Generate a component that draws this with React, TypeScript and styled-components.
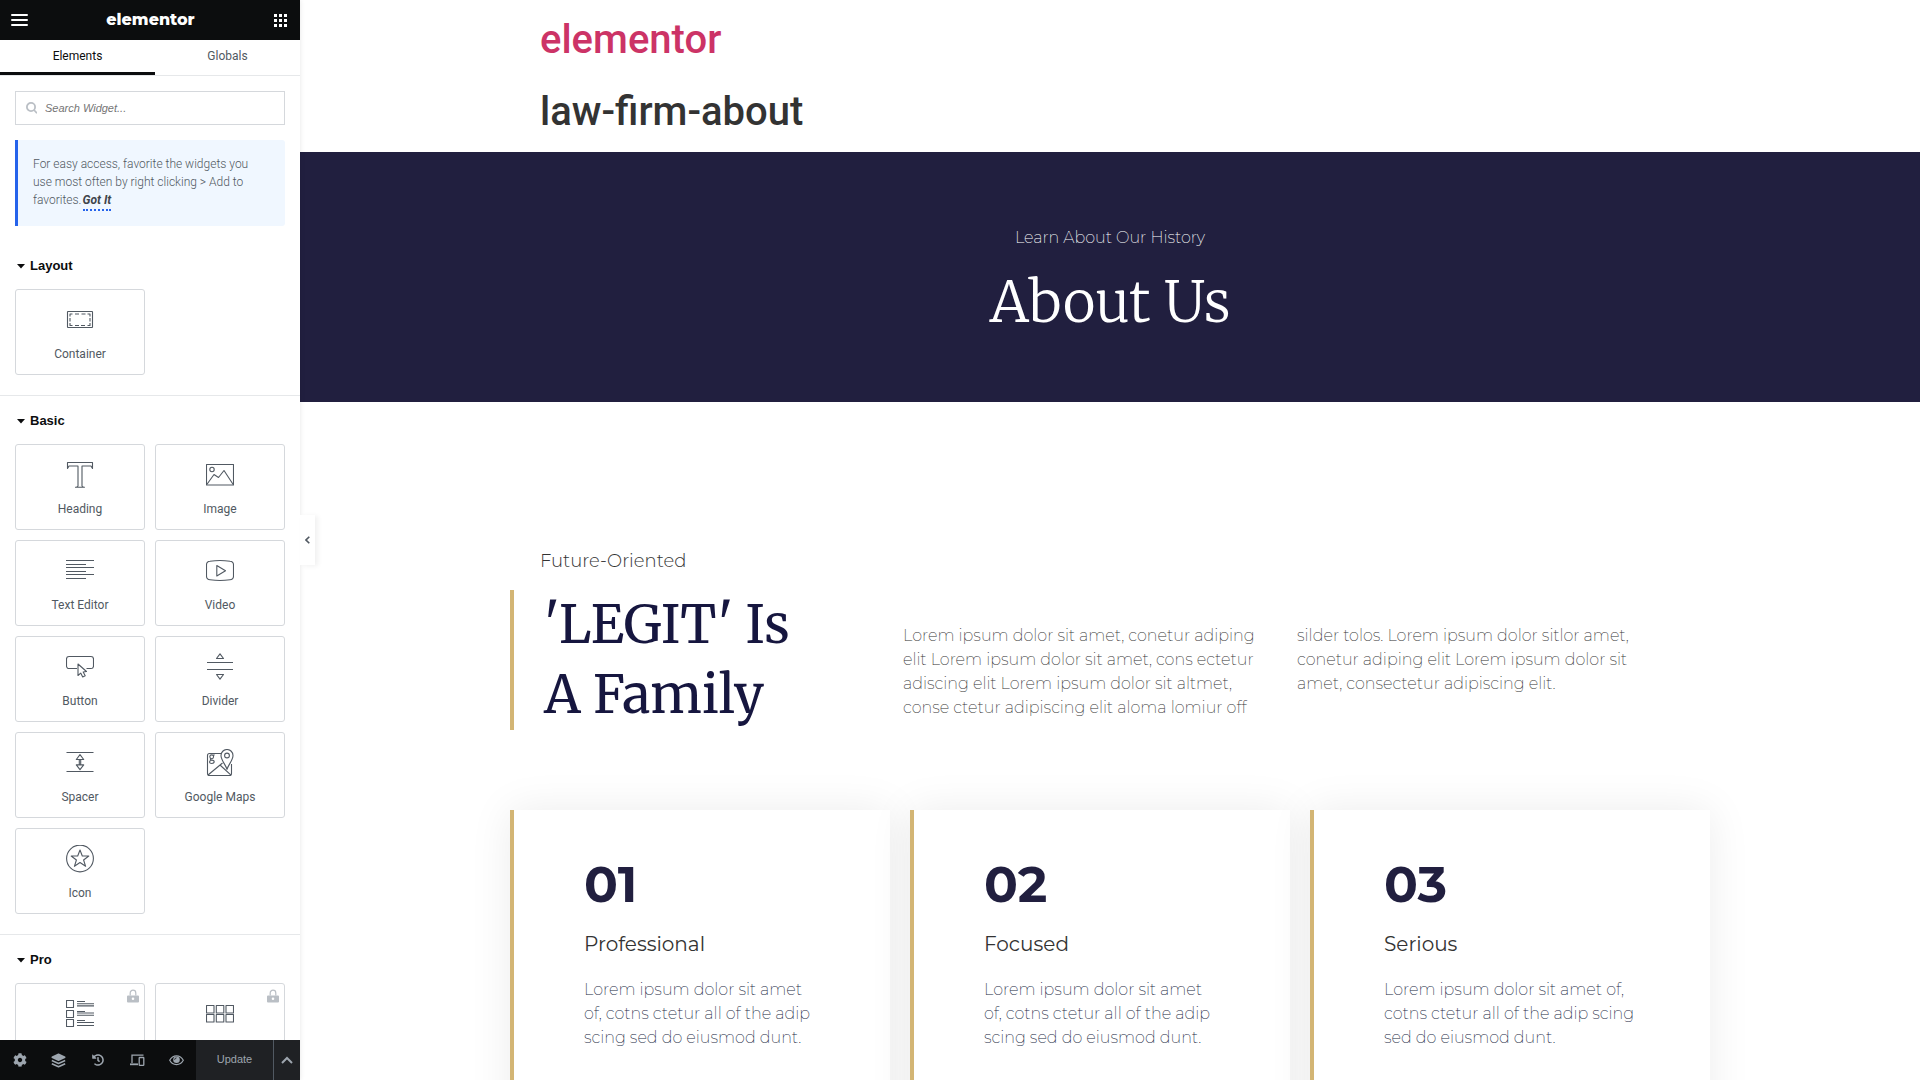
import React from "react";
import styled, { createGlobalStyle } from "styled-components";
import { FaCog, FaHistory } from "react-icons/fa";

const GlobalStyle = createGlobalStyle`
  *, *::before, *::after { box-sizing: border-box; }
  body { margin: 0; font-family: Roboto, "Liberation Sans", sans-serif; background: #fff; }
  h1, h2, h3, p { margin: 0; font-size: inherit; font-weight: inherit; }
  button { font: inherit; cursor: pointer; }
  svg { display: block; flex: none; }
`;

const ink = "#515962";
const line = "#d5d8dc";
const navy = "#211f3f";
const gold = "#d3b574";

const Editor = styled.div`
  display: flex;
  height: 100vh;
  overflow: hidden;
`;

/* ---------- Panel ---------- */

const Panel = styled.aside`
  position: relative;
  z-index: 1;
  flex: 0 0 300px;
  display: flex;
  flex-direction: column;
  background: #fff;
  color: ${ink};
  font-size: 12px;
  box-shadow: 0 0 5px rgba(0, 0, 0, 0.1);
`;

const PanelHeader = styled.header`
  flex: none;
  display: flex;
  align-items: center;
  justify-content: space-between;
  height: 40px;
  padding: 0 12px 0 11px;
  background: #0c0d0e;
  color: #fff;
`;

const HeaderButton = styled.button`
  display: flex;
  padding: 0;
  border: 0;
  background: none;
  color: inherit;
`;

const Logo = styled.span`
  font: 800 16px/24px Montserrat, Inter, sans-serif;
`;

const Tabs = styled.div`
  flex: none;
  display: flex;
  height: 36px;
  border-bottom: 1px solid #e6e8ea;
`;

const Tab = styled.button<{ $active?: boolean }>`
  flex: ${(p) => (p.$active ? "0 0 155px" : "1")};
  padding: 0;
  border: 0;
  border-bottom: 3px solid ${(p) => (p.$active ? "#0c0d0e" : "transparent")};
  background: none;
  color: ${(p) => (p.$active ? "#0c0d0e" : ink)};
  line-height: 32px;
`;

const PanelBody = styled.div`
  flex: 1;
  min-height: 0;
  overflow: hidden;
`;

const SearchBox = styled.label`
  display: flex;
  align-items: center;
  gap: 8px;
  height: 34px;
  margin: 15px;
  padding: 0 10px;
  border: 1px solid ${line};
  color: #babfc5;
`;

const SearchInput = styled.input`
  flex: 1;
  min-width: 0;
  padding: 0;
  border: 0;
  outline: 0;
  background: none;
  color: ${ink};
  font: italic 11px/16px "Liberation Sans", Arial, sans-serif;
  &::placeholder { color: #757575; opacity: 1; }
`;

const Notice = styled.p`
  && { margin: 0 15px 15px; }
  padding: 15px 24px 17px 15px;
  border-left: 3px solid #2563eb;
  border-radius: 0 3px 3px 0;
  background: #f0f7ff;
  font-weight: 300;
  line-height: 18px;
`;

const GotIt = styled.a`
  margin-left: 1px;
  padding-bottom: 2px;
  border-bottom: 2px dotted #2563eb;
  color: #3f444b;
  font-weight: 700;
  font-style: italic;
  text-decoration: none;
`;

const Category = styled.section`
  padding: 0 15px 20px;
  & + & { border-top: 1px solid #e6e8ea; }
`;

const CategoryTitle = styled.button`
  display: flex;
  align-items: center;
  gap: 5px;
  width: 100%;
  height: 48px;
  padding: 2px 2px 0;
  border: 0;
  background: none;
  color: #0c0d0e;
  font: 700 13px/16px "Liberation Sans", Arial, sans-serif;
`;

const WidgetGrid = styled.div`
  display: grid;
  grid-template-columns: 1fr 1fr;
  gap: 10px;
`;

const Widget = styled.button`
  position: relative;
  display: flex;
  flex-direction: column;
  align-items: center;
  gap: 12px;
  height: 86px;
  padding: 16px 0 0;
  border: 1px solid ${line};
  border-radius: 3px;
  background: #fff;
  color: ${ink};
  line-height: 16px;
`;

const LockBadge = styled.span`
  position: absolute;
  top: 5px;
  right: 5px;
  color: #babfc5;
`;

const Footer = styled.footer`
  flex: none;
  display: flex;
  height: 40px;
  background: #0c0d0e;
  color: #9da5ae;
`;

const ToolButton = styled.button`
  flex: 1;
  display: flex;
  align-items: center;
  justify-content: center;
  padding: 0;
  border: 0;
  background: none;
  color: inherit;
`;

const Update = styled.button`
  flex: 0 0 77px;
  padding: 0 0 3px;
  border: 0;
  background: #1f2124;
  color: #9da5ae;
  && { font: 11px/16px "Liberation Sans", Arial, sans-serif; }
`;

const UpdateMore = styled(ToolButton)`
  flex: 0 0 27px;
  border-left: 1px solid #515962;
  background: #1f2124;
`;

const Collapse = styled.button`
  position: absolute;
  top: calc(50% - 25px);
  left: 100%;
  display: flex;
  align-items: center;
  justify-content: center;
  width: 15px;
  height: 50px;
  padding: 0;
  border: 0;
  background: #fff;
  color: ${ink};
  box-shadow: 3px 1px 5px rgba(0, 0, 0, 0.06);
`;

/* ---------- Page preview ---------- */

const Preview = styled.main`
  flex: 1;
  min-width: 0;
  overflow: hidden;
`;

const SiteHeader = styled.header`
  display: flex;
  flex-direction: column;
  gap: 24px;
  max-width: 1140px;
  margin: 0 auto;
  padding: 16px 0;
  color: #333;
  font-size: 40px;
  font-weight: 500;
  line-height: 48px;
`;

const SiteLink = styled.a`
  color: #cc3366;
  text-decoration: none;
`;

const Hero = styled.section`
  display: flex;
  flex-direction: column;
  align-items: center;
  gap: 16px;
  padding: 74px 0 64px;
  background: ${navy};
  color: #fff;
  text-align: center;
`;

const HeroKicker = styled.p`
  font: 200 16px/24px Montserrat, Inter, sans-serif;
`;

const HeroTitle = styled.h2`
  font: 300 56px/72px Merriweather, "DejaVu Serif", serif;
`;

const Content = styled.section`
  max-width: 1200px;
  margin: 0 auto;
  padding-top: 146px;
`;

const Intro = styled.div`
  display: grid;
  grid-template-columns: 393px minmax(0, 758px);
  align-items: end;
`;

const Kicker = styled.p`
  padding: 0 30px 16px;
  color: #333;
  font: 300 18px/26px Montserrat, Inter, sans-serif;
`;

const IntroTitle = styled.h2`
  padding-left: 30px;
  border-left: 4px solid ${gold};
  color: #16163f;
  font: 400 52px/70px Merriweather, "DejaVu Serif", serif;
`;

const IntroText = styled.p`
  padding-bottom: 10px;
  columns: 2;
  column-gap: 30px;
  color: #333;
  font: 200 16px/24px Montserrat, Inter, sans-serif;
`;

const Cards = styled.div`
  display: grid;
  grid-template-columns: 380fr 380fr 400fr;
  gap: 20px;
  padding-top: 80px;
`;

const Card = styled.article`
  min-height: 320px;
  padding: 50px 70px;
  border-left: 4px solid ${gold};
  background: #fff;
  color: ${navy};
  box-shadow: 0 0 40px rgba(0, 0, 0, 0.08);
  font-family: Montserrat, Inter, sans-serif;
`;

const CardNumber = styled.p`
  font-size: 50px;
  font-weight: 700;
  line-height: 50px;
`;

const CardTitle = styled.h3`
  padding: 20px 0;
  color: #333;
  font-size: 20px;
  font-weight: 400;
  line-height: 28px;
`;

const CardText = styled.p`
  font-size: 16px;
  font-weight: 200;
  line-height: 24px;
`;

/* ---------- Icons ---------- */

const Glyph = ({ children }: { children: React.ReactNode }) => (
  <svg width="28" height="28" viewBox="0 0 28 28" fill="none" stroke="currentColor" strokeWidth="1.1" strokeLinejoin="round" aria-hidden="true">
    {children}
  </svg>
);

const glyphs: Record<string, React.ReactNode> = {
  container: (
    <>
      <rect x="1.5" y="5.5" width="25" height="16" rx=".5" />
      <path d="M4 10.5V8h2.5M9 8h4M15.500 8h4M21.500 8H24v2.500M24 12v3.500M24 17v2.500h-2.500M19 19.500h-4M13 19.500H9M6.500 19.500H4V17M4 15.500V12" />
    </>
  ),
  heading: <path d="M1.500 1.500h25v6l-1.500-2.500h-9v20c0 .8.700 1 2.500 1.200h-9c1.800-.2 2.500-.4 2.500-1.200V5H3L1.500 7.500z" />,
  image: (
    <>
      <rect x=".5" y="3.500" width="27" height="20.500" />
      <circle cx="6" cy="8.500" r="2.200" />
      <path d="M.8 23.500 8 13.500l4.500 3 5.500-7 9.200 14" />
    </>
  ),
  text: <path d="M0 3.500h28M0 7.500h20M0 10.500h28M0 14.500h20M0 17.500h28M0 21.500h20" />,
  video: (
    <>
      <path d="M4 4.200c6-.9 14-.9 20 0 2.500.3 3.500 1.500 3.500 3.600v11.400c0 2.100-1 3.300-3.500 3.600-6 .9-14 .9-20 0C1.500 22.500.5 21.300.5 19.200V7.800C.5 5.700 1.500 4.500 4 4.200z" />
      <path d="M10.800 8.500v10.500l8.700-5.200z" />
    </>
  ),
  button: (
    <>
      <path d="M11 15.500H3A2.500 2.500 0 0 1 .5 13V6A2.500 2.500 0 0 1 3 3.500h22A2.500 2.500 0 0 1 27.500 6v7a2.500 2.500 0 0 1-2.500 2.500h-4.500" />
      <path d="M12 11v11.500l2.700-2.400 2 3.900 2.500-1.200-2-3.800 3.300-.5z" />
    </>
  ),
  divider: (
    <path d="M1 9.500h26M1 16.500h26M14 .8l3.500 4.700h-7zM14 26.200l3.500-4.700h-7z" />
  ),
  spacer: (
    <path d="M.5 3.500h27M.5 22.500h27M14 5.700l3.700 4.800h-7.400zM14 20.700l3.700-4.800h-7.400zM13.300 10.500v5.400M14.700 10.500v5.400" />
  ),
  maps: (
    <>
      <path d="M15.500 4.500H3.500a2 2 0 0 0-2 2v18a2 2 0 0 0 2 2h20a2 2 0 0 0 2-2V15" />
      <path d="M21 20.500C20 16 15 11.500 15 6.500a6 6 0 0 1 12 0c0 5-5 9.500-6 14z" />
      <circle cx="21" cy="6.500" r="2.400" />
      <path d="M2 26l14.500-12M14 16l11 10.200" />
      <circle cx="5.700" cy="7.800" r="1.900" />
      <path d="M7 6.400l1.600-.7M5 9.500c-1.200.8-.5 1.500.8 1.600 3.300.2 3 3.400 0 3.400s-3-2.700-.3-3.300" />
    </>
  ),
  icon: (
    <>
      <circle cx="14" cy="13.500" r="13.400" />
      <path d="M14 5l2.300 6h6.500l-5.200 4 2 6.300L14 17.500l-5.600 3.800 2-6.300-5.200-4h6.500z" />
    </>
  ),
  posts: (
    <>
      <path d="M.5.500h7v7h-7zM.5 10.500h7v7h-7zM.5 19.500h7v7h-7z" />
      <path d="M11 1.500h8M11 3.800h17M11 5.900h17M11 11.500h8M11 13h17M11 15.200h17M11 20.500h8M11 22.500h17M11 25.500h17" />
    </>
  ),
  portfolio: <path d="M.5 5.500H8V13H.5zM10.300 5.500h7.500V13h-7.500zM20 5.500h7.500V13H20zM.5 14.500H8V22H.5zM10.300 14.500h7.500V22h-7.500zM20 14.500h7.500V22H20z" />,
};

const MenuIcon = () => (
  <svg width="17" height="12" viewBox="0 0 17 12" stroke="currentColor" strokeWidth="2" strokeLinecap="round" aria-hidden="true">
    <path d="M1 1h15M1 6h15M1 11h15" />
  </svg>
);

const AppsIcon = () => (
  <svg width="15" height="13" viewBox="0 0 15 13" fill="currentColor" aria-hidden="true">
    <path d="M1 0h3v3H1zM6 0h3v3H6zM11 0h3v3h-3zM1 5h3v3H1zM6 5h3v3H6zM11 5h3v3h-3zM1 10h3v3H1zM6 10h3v3H6zM11 10h3v3h-3z" />
  </svg>
);

const SearchIcon = () => (
  <svg width="11" height="12" viewBox="0 0 11 12" fill="none" stroke="currentColor" strokeWidth="1.800" aria-hidden="true">
    <circle cx="5" cy="5" r="4.100" />
    <path d="M8 8l3 3.200" />
  </svg>
);

const LockIcon = () => (
  <svg width="12" height="14" viewBox="0 0 12 14" fill="currentColor" aria-hidden="true">
    <path d="M3.200 6.500V4a2.800 2.800 0 0 1 5.600 0v2.500" fill="none" stroke="currentColor" strokeWidth="1.200" />
    <path fillRule="evenodd" d="M1 6.500h10a1 1 0 0 1 1 1v5a1 1 0 0 1-1 1H1a1 1 0 0 1-1-1v-5a1 1 0 0 1 1-1zm5 2a1.300 1.300 0 1 0 0 2.600 1.300 1.300 0 0 0 0-2.600z" />
  </svg>
);

const CaretIcon = () => (
  <svg width="8" height="5" viewBox="0 0 8 5" fill="currentColor" aria-hidden="true">
    <path d="M0 0h8L4 4.500z" />
  </svg>
);

const LayersIcon = () => (
  <svg width="15" height="15" viewBox="0 0 15 15" fill="none" stroke="currentColor" strokeWidth="1.500" strokeLinejoin="round" aria-hidden="true">
    <path d="M7.500 1.200 13.800 4.200 7.500 7.200 1.200 4.200z" fill="currentColor" />
    <path d="M.8 7.500 7.500 10.500l6.700-3M.8 10.700l6.700 3 6.700-3" />
  </svg>
);

const DevicesIcon = () => (
  <svg width="15" height="12" viewBox="0 0 15 12" fill="none" stroke="currentColor" strokeWidth="1.300" aria-hidden="true">
    <path d="M2 9V1.200h11.500" />
    <path d="M0 10.300h8" strokeWidth="1.800" />
    <rect x="9.200" y="3.500" width="4.600" height="7.800" rx=".6" />
  </svg>
);

const EyeIcon = () => (
  <svg width="15" height="11" viewBox="0 0 15 11" fill="none" stroke="currentColor" aria-hidden="true">
    <path d="M.7 5.300C3.800-.6 11.200-.6 14.300 5.300 11.200 11 3.800 11 .7 5.300z" strokeWidth="1.200" />
    <circle cx="7.500" cy="4.800" r="3.300" fill="currentColor" stroke="none" />
    <path d="M5.600 4.800a2 2 0 0 1 1.900-1.900" stroke="#0c0d0e" strokeWidth=".8" />
  </svg>
);

const ChevronUp = () => (
  <svg width="12" height="8" viewBox="0 0 12 8" fill="none" stroke="currentColor" strokeWidth="2" aria-hidden="true">
    <path d="M1 7l5-5 5 5" />
  </svg>
);

const ChevronLeft = () => (
  <svg width="5" height="8" viewBox="0 0 5 8" fill="none" stroke="currentColor" strokeWidth="1.600" aria-hidden="true">
    <path d="M4.300.7 1 4l3.300 3.300" />
  </svg>
);

/* ---------- Data ---------- */

type WidgetItem = { glyph: string; name: string; locked?: boolean };

const categories: { title: string; widgets: WidgetItem[] }[] = [
  { title: "Layout", widgets: [{ glyph: "container", name: "Container" }] },
  {
    title: "Basic",
    widgets: [
      { glyph: "heading", name: "Heading" },
      { glyph: "image", name: "Image" },
      { glyph: "text", name: "Text Editor" },
      { glyph: "video", name: "Video" },
      { glyph: "button", name: "Button" },
      { glyph: "divider", name: "Divider" },
      { glyph: "spacer", name: "Spacer" },
      { glyph: "maps", name: "Google Maps" },
      { glyph: "icon", name: "Icon" },
    ],
  },
  {
    title: "Pro",
    widgets: [
      { glyph: "posts", name: "Posts", locked: true },
      { glyph: "portfolio", name: "Portfolio", locked: true },
    ],
  },
];

const cards = [
  { number: "01", title: "Professional", text: "Lorem ipsum dolor sit amet of, cotns ctetur all of the adip scing sed do eiusmod dunt." },
  { number: "02", title: "Focused", text: "Lorem ipsum dolor sit amet of, cotns ctetur all of the adip scing sed do eiusmod dunt." },
  { number: "03", title: "Serious", text: "Lorem ipsum dolor sit amet of, cotns ctetur all of the adip scing sed do eiusmod dunt." },
];

export default function App() {
  return (
    <Editor>
      <GlobalStyle />
      <Panel>
        <PanelHeader>
          <HeaderButton aria-label="Menu"><MenuIcon /></HeaderButton>
          <Logo>elementor</Logo>
          <HeaderButton aria-label="Widgets panel"><AppsIcon /></HeaderButton>
        </PanelHeader>
        <Tabs>
          <Tab $active>Elements</Tab>
          <Tab>Globals</Tab>
        </Tabs>
        <PanelBody>
          <SearchBox>
            <SearchIcon />
            <SearchInput type="search" aria-label="Search Widget" placeholder="Search Widget..." />
          </SearchBox>
          <Notice>
            For easy access, favorite the widgets you use most often by right clicking &gt; Add to favorites.
            <GotIt href="#">Got It</GotIt>
          </Notice>
          {categories.map((category) => (
            <Category key={category.title}>
              <CategoryTitle><CaretIcon />{category.title}</CategoryTitle>
              <WidgetGrid>
                {category.widgets.map((widget) => (
                  <Widget key={widget.name} aria-label={widget.name}>
                    <Glyph>{glyphs[widget.glyph]}</Glyph>
                    {widget.locked ? <LockBadge><LockIcon /></LockBadge> : <span>{widget.name}</span>}
                  </Widget>
                ))}
              </WidgetGrid>
            </Category>
          ))}
        </PanelBody>
        <Footer>
          <ToolButton aria-label="Settings"><FaCog size={14} /></ToolButton>
          <ToolButton aria-label="Structure"><LayersIcon /></ToolButton>
          <ToolButton aria-label="History"><FaHistory size={12} /></ToolButton>
          <ToolButton aria-label="Responsive mode"><DevicesIcon /></ToolButton>
          <ToolButton aria-label="Preview changes"><EyeIcon /></ToolButton>
          <Update>Update</Update>
          <UpdateMore aria-label="Save options"><ChevronUp /></UpdateMore>
        </Footer>
        <Collapse aria-label="Hide panel"><ChevronLeft /></Collapse>
      </Panel>
      <Preview>
        <SiteHeader>
          <SiteLink href="#">elementor</SiteLink>
          <h1>law-firm-about</h1>
        </SiteHeader>
        <Hero>
          <HeroKicker>Learn About Our History</HeroKicker>
          <HeroTitle>About Us</HeroTitle>
        </Hero>
        <Content>
          <Intro>
            <div>
              <Kicker>Future-Oriented</Kicker>
              <IntroTitle>'LEGIT' Is<br />A Family</IntroTitle>
            </div>
            <IntroText>
              Lorem ipsum dolor sit amet, conetur adiping elit Lorem ipsum dolor sit amet, cons ectetur adiscing elit
              Lorem ipsum dolor sit altmet, conse ctetur adipiscing elit aloma lomiur off silder tolos. Lorem ipsum
              dolor sitlor amet, conetur adiping elit Lorem ipsum dolor sit amet, consectetur adipiscing elit.
            </IntroText>
          </Intro>
          <Cards>
            {cards.map((card) => (
              <Card key={card.number}>
                <CardNumber>{card.number}</CardNumber>
                <CardTitle>{card.title}</CardTitle>
                <CardText>{card.text}</CardText>
              </Card>
            ))}
          </Cards>
        </Content>
      </Preview>
    </Editor>
  );
}
